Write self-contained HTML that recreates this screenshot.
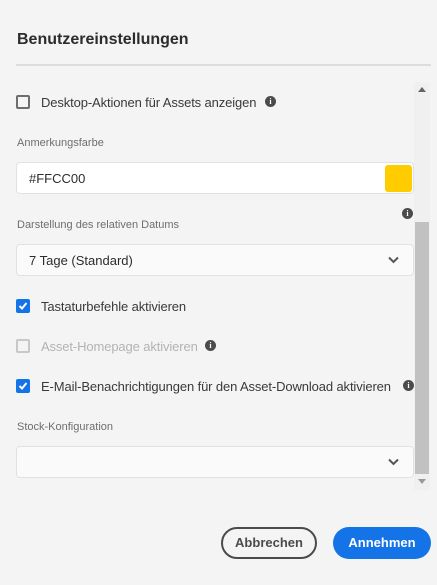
<!DOCTYPE html>
<html><head><style>
*{box-sizing:border-box;margin:0;padding:0}
body{width:437px;height:585px;background:#f4f4f4;font-family:"Liberation Sans",sans-serif;color:#2c2c2c;position:relative;overflow:hidden}
.a{position:absolute}
.t{font-size:16px;font-weight:bold;left:17px;top:31px;color:#2c2c2c}
.hr{left:16px;top:64px;width:415px;height:2px;background:#dcdcdc}
.cb{width:14px;height:14px;border:2px solid #6e6e6e;border-radius:2px}
.cb.on{background:#1473e6;border-color:#1473e6}
.cb.dis{border-color:#c8c8c8}
.lbl{font-size:13px;letter-spacing:-0.12px;color:#3a3a3a}
.sl{font-size:11px;color:#6e6e6e}
.info{width:11px;height:11px;border-radius:50%;background:#4b4b4b;color:#fff;font-size:8px;font-weight:bold;text-align:center;line-height:11px;font-family:"Liberation Serif",serif}
.field{left:16px;width:398px;height:32px;border:1px solid #e1e1e1;border-radius:4px;background:#fff}
.sel{background:#fafafa}
.chev{right:14px;top:11px}
</style></head><body>
<div class="a t">Benutzereinstellungen</div>
<div class="a hr"></div>

<div class="a" style="left:414px;top:82px;width:16px;height:408px;background:#f0f0f0"></div>
<div class="a" style="left:415px;top:222px;width:14px;height:252px;background:#c1c1c1"></div>
<svg class="a" style="left:418px;top:87px" width="8" height="5"><path d="M0 5L4 0L8 5Z" fill="#666"/></svg>
<svg class="a" style="left:418px;top:479px" width="8" height="5"><path d="M0 0L4 5L8 0Z" fill="#999"/></svg>

<div class="a cb" style="left:16px;top:95px"></div>
<div class="a lbl" style="left:41px;top:95px">Desktop-Aktionen für Assets anzeigen</div>
<div class="a info" style="left:265px;top:96px">i</div>

<div class="a sl" style="left:17px;top:137px">Anmerkungsfarbe</div>
<div class="a field" style="top:162px"><span class="a" style="left:12px;top:8px;font-size:13px;color:#2c2c2c">#FFCC00</span>
<div class="a" style="left:368px;top:2px;width:27px;height:27px;background:#ffcc00;border-radius:3px"></div></div>

<div class="a info" style="left:402px;top:208px">i</div>
<div class="a sl" style="left:17px;top:219px">Darstellung des relativen Datums</div>
<div class="a field sel" style="top:244px"><span class="a" style="left:12px;top:8px;font-size:13px">7 Tage (Standard)</span>
<svg class="a chev" width="11" height="8"><path d="M1 1.5L5.5 6L10 1.5" stroke="#555" stroke-width="2" fill="none"/></svg></div>

<div class="a cb on" style="left:16px;top:299px"><svg width="10" height="10" style="position:absolute;left:0;top:0"><path d="M1.5 5L4 7.5L8.5 2" stroke="#fff" stroke-width="2" fill="none"/></svg></div>
<div class="a lbl" style="left:41px;top:299px">Tastaturbefehle aktivieren</div>

<div class="a cb dis" style="left:16px;top:339px"></div>
<div class="a lbl" style="left:41px;top:339px;color:#b3b3b3">Asset-Homepage aktivieren</div>
<div class="a info" style="left:205px;top:340px">i</div>

<div class="a cb on" style="left:16px;top:379px"><svg width="10" height="10" style="position:absolute;left:0;top:0"><path d="M1.5 5L4 7.5L8.5 2" stroke="#fff" stroke-width="2" fill="none"/></svg></div>
<div class="a lbl" style="left:41px;top:379px">E-Mail-Benachrichtigungen für den Asset-Download aktivieren</div>
<div class="a info" style="left:403px;top:380px">i</div>

<div class="a sl" style="left:17px;top:421px">Stock-Konfiguration</div>
<div class="a field sel" style="top:446px">
<svg class="a chev" width="11" height="8"><path d="M1 1.5L5.5 6L10 1.5" stroke="#555" stroke-width="2" fill="none"/></svg></div>

<div class="a" style="left:221px;top:527px;width:96px;height:32px;border:2px solid #4b4b4b;border-radius:16px;font-size:13px;font-weight:bold;text-align:center;line-height:28px;color:#4b4b4b">Abbrechen</div>
<div class="a" style="left:333px;top:527px;width:98px;height:32px;background:#1473e6;border-radius:16px;font-size:13px;font-weight:bold;text-align:center;line-height:32px;color:#fff">Annehmen</div>
</body></html>
